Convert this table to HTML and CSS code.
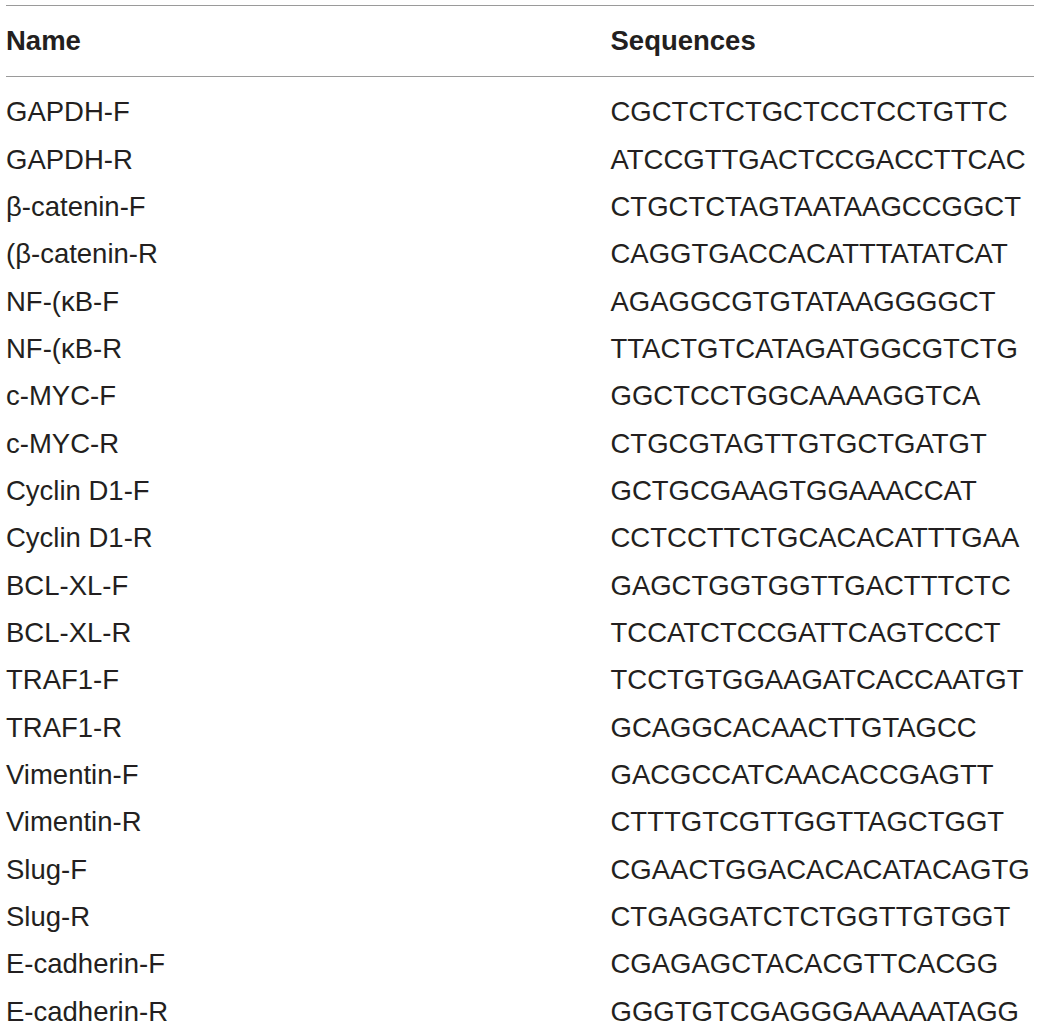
FILE: index.html
```html
<!DOCTYPE html>
<html>
<head>
<meta charset="utf-8">
<link rel="stylesheet" href="styles.css">
</head>
<body>
<div class="table">
  <div class="row head"><div class="c1">Name</div><div class="c2">Sequences</div></div>
  <div class="body">
    <div class="row"><div class="c1">GAPDH-F</div><div class="c2">CGCTCTCTGCTCCTCCTGTTC</div></div>
    <div class="row"><div class="c1">GAPDH-R</div><div class="c2">ATCCGTTGACTCCGACCTTCAC</div></div>
    <div class="row"><div class="c1">β-catenin-F</div><div class="c2">CTGCTCTAGTAATAAGCCGGCT</div></div>
    <div class="row"><div class="c1">(β-catenin-R</div><div class="c2">CAGGTGACCACATTTATATCAT</div></div>
    <div class="row"><div class="c1">NF-(κB-F</div><div class="c2">AGAGGCGTGTATAAGGGGCT</div></div>
    <div class="row"><div class="c1">NF-(κB-R</div><div class="c2">TTACTGTCATAGATGGCGTCTG</div></div>
    <div class="row"><div class="c1">c-MYC-F</div><div class="c2">GGCTCCTGGCAAAAGGTCA</div></div>
    <div class="row"><div class="c1">c-MYC-R</div><div class="c2">CTGCGTAGTTGTGCTGATGT</div></div>
    <div class="row"><div class="c1">Cyclin D1-F</div><div class="c2">GCTGCGAAGTGGAAACCAT</div></div>
    <div class="row"><div class="c1">Cyclin D1-R</div><div class="c2">CCTCCTTCTGCACACATTTGAA</div></div>
    <div class="row"><div class="c1">BCL-XL-F</div><div class="c2">GAGCTGGTGGTTGACTTTCTC</div></div>
    <div class="row"><div class="c1">BCL-XL-R</div><div class="c2">TCCATCTCCGATTCAGTCCCT</div></div>
    <div class="row"><div class="c1">TRAF1-F</div><div class="c2">TCCTGTGGAAGATCACCAATGT</div></div>
    <div class="row"><div class="c1">TRAF1-R</div><div class="c2">GCAGGCACAACTTGTAGCC</div></div>
    <div class="row"><div class="c1">Vimentin-F</div><div class="c2">GACGCCATCAACACCGAGTT</div></div>
    <div class="row"><div class="c1">Vimentin-R</div><div class="c2">CTTTGTCGTTGGTTAGCTGGT</div></div>
    <div class="row"><div class="c1">Slug-F</div><div class="c2">CGAACTGGACACACATACAGTG</div></div>
    <div class="row"><div class="c1">Slug-R</div><div class="c2">CTGAGGATCTCTGGTTGTGGT</div></div>
    <div class="row"><div class="c1">E-cadherin-F</div><div class="c2">CGAGAGCTACACGTTCACGG</div></div>
    <div class="row"><div class="c1">E-cadherin-R</div><div class="c2">GGGTGTCGAGGGAAAAATAGG</div></div>
  </div>
</div>
</body>
</html>
```

FILE: styles.css
```css
html, body {
  margin: 0;
  padding: 0;
  background: #ffffff;
}
body {
  font-family: "Liberation Sans", Arial, sans-serif;
  color: #231f20;
}
.table {
  margin: 5px 0 0 6px;
  width: 1028px;
  border-top: 1px solid #9a9a9a;
}
.row {
  display: grid;
  grid-template-columns: 604.5px 1fr;
  font-size: 27.5px;
  line-height: 47.33px;
  white-space: nowrap;
}
.row.head {
  font-weight: bold;
  line-height: 70px;
  border-bottom: 1px solid #9a9a9a;
}
.body {
  padding-top: 11.3px;
}
```
